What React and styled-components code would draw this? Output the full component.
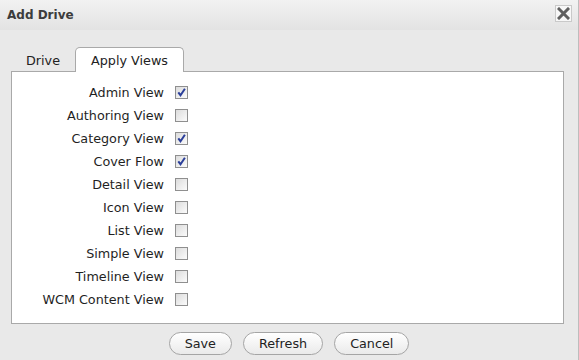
import React, { useState } from "react";
import styled, { createGlobalStyle } from "styled-components";

const Global = createGlobalStyle`
  html, body {
    margin: 0;
    padding: 0;
    background: #e9e9e9;
  }
  body {
    font-family: "DejaVu Sans", Verdana, sans-serif;
  }
`;

const VIEWS = [
  { name: "Admin View", checked: true },
  { name: "Authoring View", checked: false },
  { name: "Category View", checked: true },
  { name: "Cover Flow", checked: true },
  { name: "Detail View", checked: false },
  { name: "Icon View", checked: false },
  { name: "List View", checked: false },
  { name: "Simple View", checked: false },
  { name: "Timeline View", checked: false },
  { name: "WCM Content View", checked: false },
];

export default function App() {
  const [views, setViews] = useState(VIEWS);
  const [tab, setTab] = useState("views");

  const toggle = (name) =>
    setViews((v) =>
      v.map((i) => (i.name === name ? { ...i, checked: !i.checked } : i))
    );

  return (
    <Dialog>
      <Global />
      <TitleBar>
        <Title>Add Drive</Title>
        <CloseButton aria-label="Close">
          <svg width="13" height="13" viewBox="0 0 13 13">
            <path
              d="M2 2 L11 11 M11 2 L2 11"
              stroke="#5f5f5f"
              strokeWidth="3"
              strokeLinecap="square"
            />
          </svg>
        </CloseButton>
      </TitleBar>
      <Body>
        <Tabs>
          <Tab $w={64} $active={tab === "drive"} onClick={() => setTab("drive")}>
            Drive
          </Tab>
          <Tab $w={109} $active={tab === "views"} onClick={() => setTab("views")}>
            Apply Views
          </Tab>
        </Tabs>
        <Panel>
          {views.map((i) => (
            <Row key={i.name}>
              <Label>{i.name}</Label>
              <Check $checked={i.checked} onClick={() => toggle(i.name)}>
                {i.checked && (
                  <svg width="11" height="11" viewBox="0 0 11 11">
                    <path
                      d="M2.3 5.3 L4.5 8.2 L8.9 1.8"
                      fill="none"
                      stroke="#2b3f9a"
                      strokeWidth="2"
                    />
                  </svg>
                )}
              </Check>
            </Row>
          ))}
        </Panel>
        <Buttons>
          <Button>Save</Button>
          <Button>Refresh</Button>
          <Button>Cancel</Button>
        </Buttons>
      </Body>
    </Dialog>
  );
}

const Dialog = styled.div`
  width: 578px;
  height: 360px;
  border-right: 1px solid #bdbdbd;
  background: #e9e9e9;
  color: #222;
`;

const TitleBar = styled.div`
  height: 30px;
  display: flex;
  align-items: center;
  justify-content: space-between;
  padding: 0 6px 0 7px;
  background: linear-gradient(#f2f2f2, #e3e3e3);
`;

const Title = styled.div`
  font-weight: bold;
  font-size: 12px;
  color: #3c3c3c;
  margin-top: -1px;
`;

const CloseButton = styled.div`
  width: 15px;
  height: 15px;
  margin-top: -3px;
  display: flex;
  align-items: center;
  justify-content: center;
  border: 1px solid #c9c9c9;
  background: #f7f7f7;
`;

const Body = styled.div`
  padding: 17px 14px 0 11px;
`;

const Tabs = styled.div`
  display: flex;
  align-items: flex-end;
  height: 25px;
  position: relative;
  z-index: 1;
  margin-bottom: -1px;
`;

const Tab = styled.div`
  font-size: 12.75px;
  box-sizing: border-box;
  width: ${(p) => p.$w}px;
  height: 25px;
  padding-top: 5px;
  text-align: center;
  white-space: nowrap;
  cursor: pointer;
  border: 1px solid ${(p) => (p.$active ? "#a9a9a9" : "transparent")};
  border-bottom: none;
  border-radius: 5px 5px 0 0;
  background: ${(p) => (p.$active ? "#fff" : "transparent")};
  color: #222;
`;

const Panel = styled.div`
  background: #fff;
  border: 1px solid #a9a9a9;
  height: 228px;
  padding: 9px 0 14px 0;
`;

const Row = styled.div`
  display: grid;
  grid-template-columns: 152px 13px;
  column-gap: 11px;
  align-items: center;
  height: 23px;
`;

const Label = styled.div`
  font-size: 12.75px;
  text-align: right;
  color: #1f1f1f;
`;

const Check = styled.div`
  width: 13px;
  height: 13px;
  box-sizing: border-box;
  border: 1px solid #8f8f8f;
  background: linear-gradient(135deg, #dcdcdc, #fbfbfb);
  display: flex;
  align-items: center;
  justify-content: center;
  cursor: pointer;
`;

const Buttons = styled.div`
  display: flex;
  justify-content: center;
  gap: 11px;
  margin-top: 8px;
  padding-left: 3px;
`;

const Button = styled.div`
  height: 23px;
  box-sizing: border-box;
  padding: 0 15px;
  display: flex;
  align-items: center;
  font-size: 12.75px;
  color: #222;
  border: 1px solid #a5a5a5;
  border-radius: 12px;
  background: linear-gradient(#ffffff, #eaeaea);
  cursor: pointer;
`;
